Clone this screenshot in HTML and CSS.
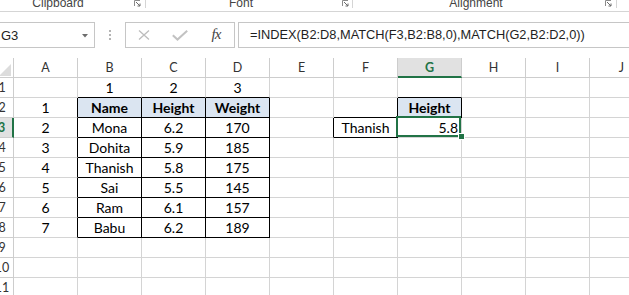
FILE: index.html
```html
<!DOCTYPE html>
<html>
<head>
<meta charset="utf-8">
<link rel="stylesheet" href="styles.css">
</head>
<body>
<div class="ribbon">
  <div class="grp g1"><span class="lbl l1">Clipboard</span><svg class="launch" width="7" height="7" viewBox="0 0 7 7"><path d="M0.5 6V0.5H6" fill="none" stroke="#8a8a8a"/><path d="M2 2L6 6M6 3.5V6H3.5" fill="none" stroke="#6a6a6a"/></svg></div>
  <div class="grp g2"><span class="lbl l2">Font</span><svg class="launch" width="7" height="7" viewBox="0 0 7 7"><path d="M0.5 6V0.5H6" fill="none" stroke="#8a8a8a"/><path d="M2 2L6 6M6 3.5V6H3.5" fill="none" stroke="#6a6a6a"/></svg></div>
  <div class="grp g3"><span class="lbl l3">Alignment</span><svg class="launch" width="7" height="7" viewBox="0 0 7 7"><path d="M0.5 6V0.5H6" fill="none" stroke="#8a8a8a"/><path d="M2 2L6 6M6 3.5V6H3.5" fill="none" stroke="#6a6a6a"/></svg></div>
</div>

<div class="fbar">
  <div class="namebox"><span>G3</span><svg width="6" height="4" viewBox="0 0 6 4"><path d="M0 0H6L3 3.5Z" fill="#6d6d6d"/></svg></div>
  <div class="grip"><i></i><i></i><i></i></div>
  <div class="fbtns">
    <span class="fb"><svg width="12" height="10" viewBox="0 0 12 10"><path d="M1 0.5L11 9.5M11 0.5L1 9.5" stroke="#bdbdbd" stroke-width="1.3" fill="none"/></svg></span>
    <span class="fb"><svg width="16" height="11" viewBox="0 0 16 11"><path d="M0.8 5.2L5.5 9.6L15.2 0.8" stroke="#c2c2c2" stroke-width="2" fill="none"/></svg></span>
    <span class="fb fx">fx</span>
  </div>
  <div class="finput">=INDEX(B2:D8,MATCH(F3,B2:B8,0),MATCH(G2,B2:D2,0))</div>
</div>

<div class="sheet">
  <div class="c h corner"><i class="tri"></i></div>
  <div class="c h">A</div><div class="c h">B</div><div class="c h">C</div><div class="c h">D</div><div class="c h">E</div><div class="c h">F</div><div class="c h hsel">G</div><div class="c h">H</div><div class="c h">I</div><div class="c h">J</div>

  <div class="c rh">1</div>
  <div class="c"></div><div class="c bb">1</div><div class="c bb">2</div><div class="c bb">3</div><div class="c"></div><div class="c"></div><div class="c bb"></div><div class="c"></div><div class="c"></div><div class="c"></div>

  <div class="c rh">2</div>
  <div class="c br">1</div><div class="c th br bb">Name</div><div class="c th br bb">Height</div><div class="c th br bb">Weight</div><div class="c"></div><div class="c br bb"></div><div class="c th br bb">Height</div><div class="c"></div><div class="c"></div><div class="c"></div>

  <div class="c rh rsel">3</div>
  <div class="c br">2</div><div class="c br bb">Mona</div><div class="c br bb">6.2</div><div class="c br bb">170</div><div class="c br"></div><div class="c br bb">Thanish</div><div class="c num sel">5.8<i class="selbox"></i><i class="handle"></i></div><div class="c"></div><div class="c"></div><div class="c"></div>

  <div class="c rh">4</div>
  <div class="c br">3</div><div class="c br bb">Dohita</div><div class="c br bb">5.9</div><div class="c br bb">185</div><div class="c"></div><div class="c"></div><div class="c"></div><div class="c"></div><div class="c"></div><div class="c"></div>

  <div class="c rh">5</div>
  <div class="c br">4</div><div class="c br bb">Thanish</div><div class="c br bb">5.8</div><div class="c br bb">175</div><div class="c"></div><div class="c"></div><div class="c"></div><div class="c"></div><div class="c"></div><div class="c"></div>

  <div class="c rh">6</div>
  <div class="c br">5</div><div class="c br bb">Sai</div><div class="c br bb">5.5</div><div class="c br bb">145</div><div class="c"></div><div class="c"></div><div class="c"></div><div class="c"></div><div class="c"></div><div class="c"></div>

  <div class="c rh">7</div>
  <div class="c br">6</div><div class="c br bb">Ram</div><div class="c br bb">6.1</div><div class="c br bb">157</div><div class="c"></div><div class="c"></div><div class="c"></div><div class="c"></div><div class="c"></div><div class="c"></div>

  <div class="c rh">8</div>
  <div class="c br">7</div><div class="c br bb">Babu</div><div class="c br bb">6.2</div><div class="c br bb">189</div><div class="c"></div><div class="c"></div><div class="c"></div><div class="c"></div><div class="c"></div><div class="c"></div>

  <div class="c rh">9</div>
  <div class="c"></div><div class="c"></div><div class="c"></div><div class="c"></div><div class="c"></div><div class="c"></div><div class="c"></div><div class="c"></div><div class="c"></div><div class="c"></div>

  <div class="c rh">10</div>
  <div class="c"></div><div class="c"></div><div class="c"></div><div class="c"></div><div class="c"></div><div class="c"></div><div class="c"></div><div class="c"></div><div class="c"></div><div class="c"></div>

  <div class="c rh">11</div>
  <div class="c"></div><div class="c"></div><div class="c"></div><div class="c"></div><div class="c"></div><div class="c"></div><div class="c"></div><div class="c"></div><div class="c"></div><div class="c"></div>
</div>
</body>
</html>
```

FILE: styles.css
```css
html, body {
  margin: 0;
  padding: 0;
  background: #fff;
  overflow: hidden;
}
body {
  width: 629px;
  height: 295px;
  font-family: "Liberation Sans", Arial, sans-serif;
}

/* ribbon strip */
.ribbon {
  display: flex;
  align-items: flex-start;
  height: 11px;
  border-bottom: 1px solid #d5d5d5;
  overflow: hidden;
}
.grp {
  display: flex;
  align-items: flex-start;
  height: 8px;
  border-right: 1px solid #d5d5d5;
}
.g1 { width: 145px; }
.g2 { width: 206px; }
.g3 { width: 263px; }
.lbl {
  display: block;
  font-size: 12px;
  line-height: 14px;
  margin-top: -4px;
  color: #444;
  text-align: center;
  white-space: nowrap;
}
.l1 { width: 116px; }
.l2 { width: 190px; }
.l3 { width: 246px; }
.launch {
  display: block;
  margin-left: auto;
  margin-right: 4px;
  margin-top: 0;
}
.g2 .launch { margin-right: 3px; }

/* formula bar */
.fbar {
  display: flex;
  height: 26px;
  margin-top: 10px;
}
.namebox {
  box-sizing: border-box;
  width: 96px;
  margin-left: -1px;
  border: 1px solid #c6c6c6;
  display: flex;
  align-items: center;
  justify-content: space-between;
  padding: 0 6px 0 1px;
  font-size: 13px;
  color: #222;
}
.namebox svg { display: block; margin-top: 1px; }
.grip {
  width: 2px;
  margin: 0 14px;
  display: flex;
  flex-direction: column;
  justify-content: center;
  gap: 2px;
}
.grip i {
  display: block;
  width: 2px;
  height: 2px;
  background: #b4b4b4;
}
.fbtns {
  box-sizing: border-box;
  width: 110px;
  border: 1px solid #c6c6c6;
  display: flex;
  padding-left: 0;
}
.fb {
  width: 36px;
  display: flex;
  align-items: center;
  justify-content: center;
}
.fb svg { display: block; }
.fx {
  font-family: "Liberation Serif", "Times New Roman", serif;
  font-style: italic;
  font-size: 15px;
  color: #444;
  letter-spacing: -1px;
  padding-bottom: 1px;
}
.finput {
  flex: 1;
  margin-left: 3px;
  border: 1px solid #c6c6c6;
  border-right: none;
  padding-left: 11px;
  font-size: 12.8px;
  line-height: 24px;
  white-space: nowrap;
  color: #1e1e1e;
  overflow: hidden;
}

/* sheet grid */
.sheet {
  margin-top: 10px;
  margin-left: -9px;
  display: grid;
  grid-template-columns: 23px repeat(10, 64px);
  grid-auto-rows: 20px;
}
.c {
  box-sizing: border-box;
  border-right: 1px solid #d4d4d4;
  border-bottom: 1px solid #d4d4d4;
  font-family: Lato, "Liberation Sans", sans-serif;
  font-size: 14px;
  line-height: 19px;
  text-align: center;
  white-space: nowrap;
  color: #000;
}
.h, .rh {
  font-family: Lato, "Liberation Sans", sans-serif;
  font-size: 12.5px;
  color: #333;
  border-color: #cdcdcd;
}
.corner {
  display: flex;
  justify-content: flex-end;
  align-items: flex-end;
  padding: 0 2px 1px 0;
}
.tri {
  display: block;
  width: 0;
  height: 0;
  border-left: 12px solid transparent;
  border-bottom: 12px solid #dcdcdc;
}
.hsel {
  background: #e1e1e1;
  color: #217346;
  font-weight: bold;
  border-bottom: 2px solid #217346;
}
.rsel {
  background: #e1e1e1;
  color: #217346;
  font-weight: bold;
  border-right: 2px solid #217346;
}
.br { border-right-color: #000; }
.bb { border-bottom-color: #000; }
.th {
  background: #dbe5f1;
  font-weight: bold;
}
.num {
  text-align: right;
  padding-right: 3px;
}
.sel { position: relative; }
.selbox {
  position: absolute;
  left: -2px;
  top: -2px;
  width: 65px;
  height: 21px;
  box-sizing: border-box;
  border: 2px solid #217346;
}
.handle {
  position: absolute;
  left: 60px;
  top: 15px;
  width: 5px;
  height: 5px;
  background: #217346;
  border: 1px solid #fff;
}
```
